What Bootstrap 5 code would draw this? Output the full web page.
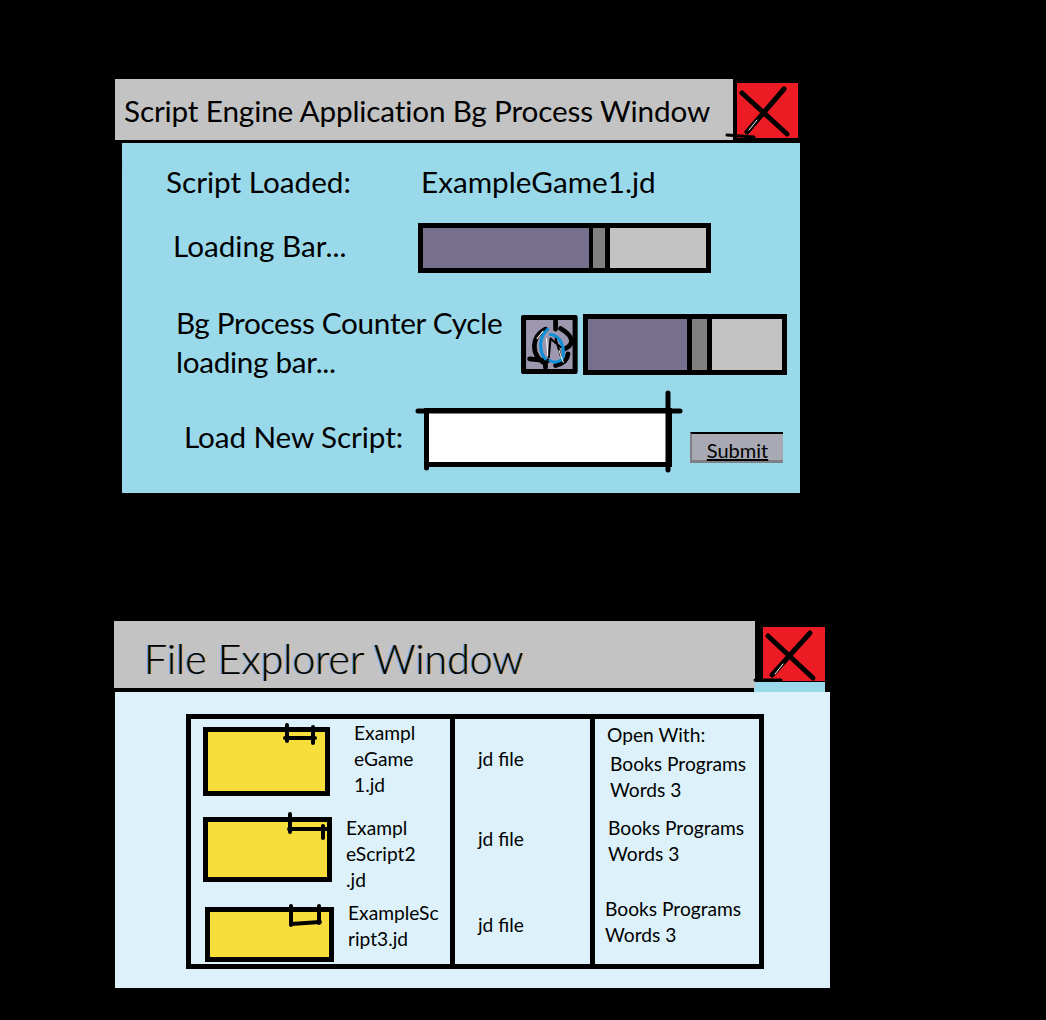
<!DOCTYPE html>
<html lang="en">
<head>
    <meta charset="UTF-8">
    <meta name="viewport" content="width=device-width, initial-scale=1.0">
    <title>Script Engine Mockup</title>
    <link href="https://cdn.jsdelivr.net/npm/bootstrap@5.3.0/dist/css/bootstrap.min.css" rel="stylesheet">
    <style>
        body {
            background: #000;
            color: #000;
            font-family: Lato, "Open Sans", sans-serif;
            height: 1020px;
            overflow: hidden;
        }
        .sketch-win { margin-left: 114px; }
        .win-one { padding-top: 79px; margin-left: 115px; }
        .win-two { margin-top: 128px; }
        .win-title { background: #c3c3c3; }
        .win-one .win-title {
            width: 618px;
            height: 61px;
            font-size: 29.7px;
            letter-spacing: -.14px;
            padding: 4px 0 0 9px;
        }
        .win-two .win-title {
            width: 641px;
            height: 67px;
            font-size: 41px;
            font-weight: 300;
            padding: 8px 0 0 30px;
            text-shadow: -1.5px 0 rgba(70, 160, 255, .8), 1.5px 0 rgba(240, 160, 60, .7);
        }
        .close-box { position: relative; background: #ed1c24; }
        .win-one .close-box { width: 61px; height: 55px; margin: 4px 0 0 4px; }
        .win-two .close-box { width: 62px; height: 54px; margin: 6px 0 0 8px; }
        .close-box svg { position: absolute; left: 0; top: 0; overflow: visible; }
        .process-body {
            position: relative;
            background: #99d9ea;
            width: 678px;
            height: 350px;
            margin: 3px 0 0 7px;
            font-size: 29.7px;
        }
        .edge-tick { position: absolute; left: -6px; top: 1px; overflow: visible; }
        .row-loaded { padding: 22px 0 0 44px; height: 56px; }
        .row-loaded .row-label { width: 255px; }
        .row-bar { margin-top: 24px; padding-left: 51px; }
        .row-bar .row-label { width: 245px; margin-top: -4px; }
        .row-counter { margin-top: 32px; padding-left: 54px; height: 78px; }
        .row-counter .row-label { width: 345px; line-height: 39px; letter-spacing: -.3px; margin-top: -4px; }
        .row-load { margin-top: 25px; padding-left: 62px; }
        .row-load .row-label { width: 240px; letter-spacing: -.1px; }
        .bar-track {
            position: relative;
            height: auto;
            border: 5px solid #000;
            background: #c3c3c3;
            font-size: 0;
        }
        .bar-one { width: 293px; height: 50px; }
        .bar-two { width: 204px; height: 61px; margin-left: 5px; }
        .bar-fill { background: #76708e; }
        .bar-grip { background: #808080; border: solid #000; border-width: 0 5px; flex: none; }
        .bar-one .bar-grip { width: 21px; border-left-width: 4px; }
        .bar-two .bar-grip { width: 25px; }
        .spin-box {
            width: 57px;
            height: 59px;
            flex: none;
        }
        .script-wrap { position: relative; width: 248px; height: 59px; }
        .script-input {
            width: 100%;
            height: 100%;
            border: 5px solid #000;
            background: #fff;
        }
        .script-wrap svg { position: absolute; left: 0; top: 0; overflow: visible; }
        .submit-btn {
            align-self: flex-end;
            width: 93px;
            height: 31px;
            margin: 0 0 4px 18px;
            padding: 6px 0 0;
            background: #a9a9b4;
            border: 0;
            border-top: 2px solid #000;
            border-left: 2px solid #7f7f88;
            border-bottom: 3px solid #7f7f88;
            color: #000;
            font-size: 20px;
            line-height: 20px;
            text-decoration: underline;
        }
        .explorer-sliver { background: #99d9ea; width: 71px; height: 10px; margin: -6px 0 0 640px; }
        .explorer-body {
            background: #dcf1f9;
            width: 715px;
            height: 296px;
            margin-left: 1px;
            padding: 22px 0 0 71px;
            font-size: 19.2px;
            line-height: 26px;
        }
        .file-grid { width: 578px; height: 255px; border: 5px solid #000; }
        .file-col { border-right: 5px solid #000; flex: none; }
        .col-names { width: 264px; }
        .col-types { width: 140px; padding-left: 23px; }
        .col-open { flex: 1; padding-left: 12px; }
        .name-row { display: flex; align-items: flex-start; }
        .row-first { padding-left: 12px; }
        .row-second { margin-top: 18px; padding-left: 12px; }
        .row-third { margin-top: 8px; padding-left: 14px; }
        .folder-box {
            position: relative;
            background: #f7de3a;
            border: 5px solid #000;
            flex: none;
        }
        .folder-box svg { position: absolute; left: -5px; top: -5px; overflow: visible; }
        .row-first .folder-box { width: 127px; height: 69px; margin-top: 8px; }
        .row-second .folder-box { width: 129px; height: 65px; margin-top: 1px; }
        .row-third .folder-box { width: 129px; height: 55px; margin-top: 6px; }
        .row-first .file-name { margin: 1px 0 0 24px; }
        .row-second .file-name { margin: -1px 0 0 14px; }
        .row-third .file-name { margin: -1px 0 0 14px; }
        .type-first { margin-top: 27px; }
        .type-second { margin-top: 54px; }
        .type-third { margin-top: 60px; }
        .open-head { margin-top: 3px; }
        .open-first { margin: 3px 0 0 3px; }
        .open-second { margin: 12px 0 0 1px; }
        .open-third { margin: 29px 0 0 -2px; }
    </style>
</head>
<body>
    <!-- Script engine window -->
    <div class="sketch-win win-one">
        <div class="d-flex">
            <div class="win-title d-flex align-items-center">Script Engine Application Bg Process Window</div>
            <div class="close-box">
                <svg width="61" height="55" viewBox="0 0 61 55" fill="none" stroke-linecap="round">
                    <path d="M5 10 L50 51 M47 6 L10 49" stroke="#000" stroke-width="5"/>
                    <path d="M12 47 L20 37" stroke="#fff" stroke-width="1"/>
                    <path d="M-10 52 L17 54" stroke="#000" stroke-width="3"/>
                </svg>
            </div>
        </div>
        <div class="process-body">
            <svg class="edge-tick" width="12" height="30" fill="none"><path d="M1 2 Q6 12 5 28" stroke="#000" stroke-width="2"/></svg>
            <div class="row-loaded d-flex align-items-center">
                <div class="row-label">Script Loaded:</div>
                <div>ExampleGame1.jd</div>
            </div>
            <div class="row-bar d-flex align-items-center">
                <div class="row-label">Loading Bar...</div>
                <div class="progress bar-track bar-one rounded-0">
                    <div class="progress-bar bar-fill" style="width: 58.5%"></div>
                    <div class="bar-grip"></div>
                </div>
            </div>
            <div class="row-counter d-flex align-items-center">
                <div class="row-label">Bg Process Counter Cycle<br>loading bar...</div>
                <svg class="spin-box" viewBox="33 30 168 175" fill="none" stroke-linecap="round" stroke-linejoin="round">
                    <rect x="40" y="37" width="153" height="161" fill="#9d97b0" stroke="#000" stroke-width="15"/>
                    <path d="M135 28 V72 M105 72 C62 95 60 150 105 175 M150 70 C192 95 190 118 160 132 M58 160 L112 166 M105 170 V186 M135 180 C158 174 170 165 172 145" stroke="#000" stroke-width="14"/>
                    <path d="M112 72 C80 100 90 145 105 160 M120 88 C150 90 165 130 155 160 C145 172 130 172 118 165" stroke="#0a8fd8" stroke-width="9"/>
                    <path d="M120 100 L115 155 M135 100 L150 150 M120 100 L150 125" stroke="#000" stroke-width="6"/>
                    <path d="M98 78 L80 100 M145 135 L158 170 M108 100 L112 150" stroke="#fff" stroke-width="3"/>
                </svg>
                <div class="progress bar-track bar-two rounded-0">
                    <div class="progress-bar bar-fill" style="width: 51%"></div>
                    <div class="bar-grip"></div>
                </div>
            </div>
            <div class="row-load d-flex">
                <div class="row-label align-self-center">Load New Script:</div>
                <div class="script-wrap">
                    <input class="script-input d-block rounded-0" type="text" aria-label="Load New Script">
                    <svg width="248" height="59" fill="none" stroke="#000" stroke-linecap="round">
                        <path d="M-6 3 H256 M244 -15 V62 M2.5 3 V60" stroke-width="5"/>
                    </svg>
                </div>
                <button class="btn submit-btn rounded-0" type="button">Submit</button>
            </div>
        </div>
    </div>

    <!-- File explorer window -->
    <div class="sketch-win win-two">
        <div class="d-flex">
            <div class="win-title d-flex align-items-center">File Explorer Window</div>
            <div class="close-box">
                <svg width="62" height="54" viewBox="0 0 62 54" fill="none" stroke-linecap="round">
                    <path d="M5 9 L50 51 M47 6 L9 48" stroke="#000" stroke-width="5"/>
                    <path d="M12 47 L20 37" stroke="#fff" stroke-width="1"/>
                    <path d="M-8 53 L18 53" stroke="#000" stroke-width="3"/>
                </svg>
            </div>
        </div>
        <div class="explorer-sliver"></div>
        <div class="explorer-body">
            <div class="file-grid d-flex">
                <div class="file-col col-names">
                    <div class="name-row row-first">
                        <div class="folder-box">
                            <svg width="127" height="69" fill="none" stroke="#000" stroke-width="4" stroke-linecap="round"><path d="M84 -2 V14 M110 0 V16 M82 11 H112"/></svg>
                        </div>
                        <div class="file-name">Exampl<br>eGame<br>1.jd</div>
                    </div>
                    <div class="name-row row-second">
                        <div class="folder-box">
                            <svg width="129" height="65" fill="none" stroke="#000" stroke-width="4" stroke-linecap="round"><path d="M87 -3 V15 M120 9 V21 M86 12 H125"/></svg>
                        </div>
                        <div class="file-name">Exampl<br>eScript2<br>.jd</div>
                    </div>
                    <div class="name-row row-third">
                        <div class="folder-box">
                            <svg width="129" height="55" fill="none" stroke="#000" stroke-width="4" stroke-linecap="round"><path d="M86 -1 V18 M114 -1 V16 M86 17 L115 15"/></svg>
                        </div>
                        <div class="file-name">ExampleSc<br>ript3.jd</div>
                    </div>
                </div>
                <div class="file-col col-types">
                    <div class="type-first">jd file</div>
                    <div class="type-second">jd file</div>
                    <div class="type-third">jd file</div>
                </div>
                <div class="col-open">
                    <div class="open-head">Open With:</div>
                    <div class="open-first">Books Programs<br>Words 3</div>
                    <div class="open-second">Books Programs<br>Words 3</div>
                    <div class="open-third">Books Programs<br>Words 3</div>
                </div>
            </div>
        </div>
    </div>

    <script src="https://cdn.jsdelivr.net/npm/bootstrap@5.3.0/dist/js/bootstrap.bundle.min.js"></script>
</body>
</html>
